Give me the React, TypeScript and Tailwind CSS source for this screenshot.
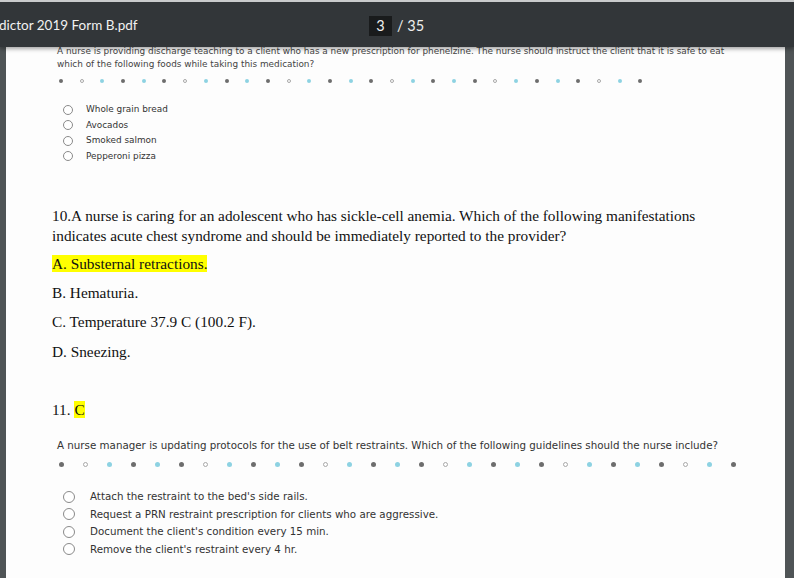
import React from 'react';

type DotKind = 'dark' | 'hollow' | 'cyan';

const pattern: DotKind[] = ['dark', 'hollow', 'cyan', 'dark', 'cyan'];

const DotRow: React.FC<{ count: number; big?: boolean }> = ({ count, big }) => {
    const dots = Array.from({ length: count }, (_, i) => pattern[i % 5]);
    return (
        <div className={`flex items-center ${big ? 'gap-[19px]' : 'gap-[16.7px]'}`}>
            {dots.map((kind, i) => {
                const size = big ? 'w-[5px] h-[5px]' : 'w-[4px] h-[4px]';
                const color =
                    kind === 'dark'
                        ? 'bg-[#6d6d6d]'
                        : kind === 'cyan'
                        ? 'bg-[#8dd2e2]'
                        : 'bg-white border border-[#a8a8a8]';
                return <span key={i} className={`block rounded-full shrink-0 ${size} ${color}`} />;
            })}
        </div>
    );
};

const Radio: React.FC<{ big?: boolean }> = ({ big }) => (
    <span
        className={`block rounded-full border border-[#8a8a8a] bg-white shrink-0 ${big ? 'w-[12px] h-[12px]' : 'w-[10px] h-[10px]'}`}
    />
);

const verdana = { fontFamily: '"DejaVu Sans", Verdana, sans-serif' };
const times = { fontFamily: '"Liberation Serif", "Times New Roman", serif' };
const ui = { fontFamily: 'Lato, Roboto, "Noto Sans", sans-serif' };

export default function App() {
    const q9Options = ['Whole grain bread', 'Avocados', 'Smoked salmon', 'Pepperoni pizza'];
    const q11Options = [
        "Attach the restraint to the bed's side rails.",
        'Request a PRN restraint prescription for clients who are aggressive.',
        "Document the client's condition every 15 min.",
        "Remove the client's restraint every 4 hr.",
    ];

    return (
        <div className="w-[794px] h-[578px] overflow-hidden bg-[#4f5456] flex flex-col">
            {/* toolbar */}
            <div className="relative z-10 h-[47px] shrink-0 bg-[#323639] border-t-[2px] border-[#c9cbcc] shadow-[0_2px_4px_rgba(0,0,0,0.35)] flex items-center pt-[2px]">
                <div className="w-[370px] text-[13.5px] text-[#f1f1f1] -ml-[1px]" style={ui}>
                    dictor 2019 Form B.pdf
                </div>
                <div className="flex items-center text-[14.5px] text-[#eeeeee]" style={ui}>
                    <span className="w-[23px] h-[20px] bg-[#191b1c] flex items-center justify-center">3</span>
                    <span className="ml-[5px]">/ 35</span>
                </div>
            </div>

            {/* page */}
            <div className="-mt-[2px] flex-1 pl-[6px] pr-[9px]">
                <div className="h-full bg-[#fdfdfd] pl-[46px]">
                    <div className="pl-[5px] text-[8.9px] leading-[13px] text-[#444]" style={verdana}>
                        <p className="whitespace-nowrap">
                            A nurse is providing discharge teaching to a client who has a new prescription for phenelzine. The nurse should instruct the client that it is safe to eat
                        </p>
                        <p>which of the following foods while taking this medication?</p>
                    </div>
                    <div className="mt-[8px] pl-[7px]">
                        <DotRow count={29} />
                    </div>
                    <div className="mt-[19px] pl-[11px]" style={verdana}>
                        {q9Options.map((o) => (
                            <div key={o} className="flex items-center h-[15.5px]">
                                <Radio />
                                <span className="ml-[13px] text-[8.9px] text-[#333]">{o}</span>
                            </div>
                        ))}
                    </div>

                    <div className="mt-[42px] text-[15.3px] leading-[20px] text-[#111]" style={times}>
                        <p>
                            10.A nurse is caring for an adolescent who has sickle-cell anemia. Which of the following manifestations
                            <br />
                            indicates acute chest syndrome and should be immediately reported to the provider?
                        </p>
                        <p className="mt-[8px]">
                            <span className="bg-[#ffff00]">A. Substernal retractions.</span>
                        </p>
                        <p className="mt-[9px]">B. Hematuria.</p>
                        <p className="mt-[9px]">C. Temperature 37.9 C (100.2 F).</p>
                        <p className="mt-[10px]">D. Sneezing.</p>
                        <p className="mt-[38px]">
                            11. <span className="bg-[#ffff00]">C</span>
                        </p>
                    </div>

                    <div className="mt-[18px] pl-[5px] text-[10.3px] leading-[14px] text-[#333]" style={verdana}>
                        A nurse manager is updating protocols for the use of belt restraints. Which of the following guidelines should the nurse include?
                    </div>
                    <div className="mt-[10px] pl-[7px]">
                        <DotRow count={29} big />
                    </div>
                    <div className="mt-[21px] pl-[11px]" style={verdana}>
                        {q11Options.map((o) => (
                            <div key={o} className="flex items-center h-[17.5px]">
                                <Radio big />
                                <span className="ml-[15px] text-[10.3px] text-[#333]">{o}</span>
                            </div>
                        ))}
                    </div>
                </div>
            </div>
        </div>
    );
}
